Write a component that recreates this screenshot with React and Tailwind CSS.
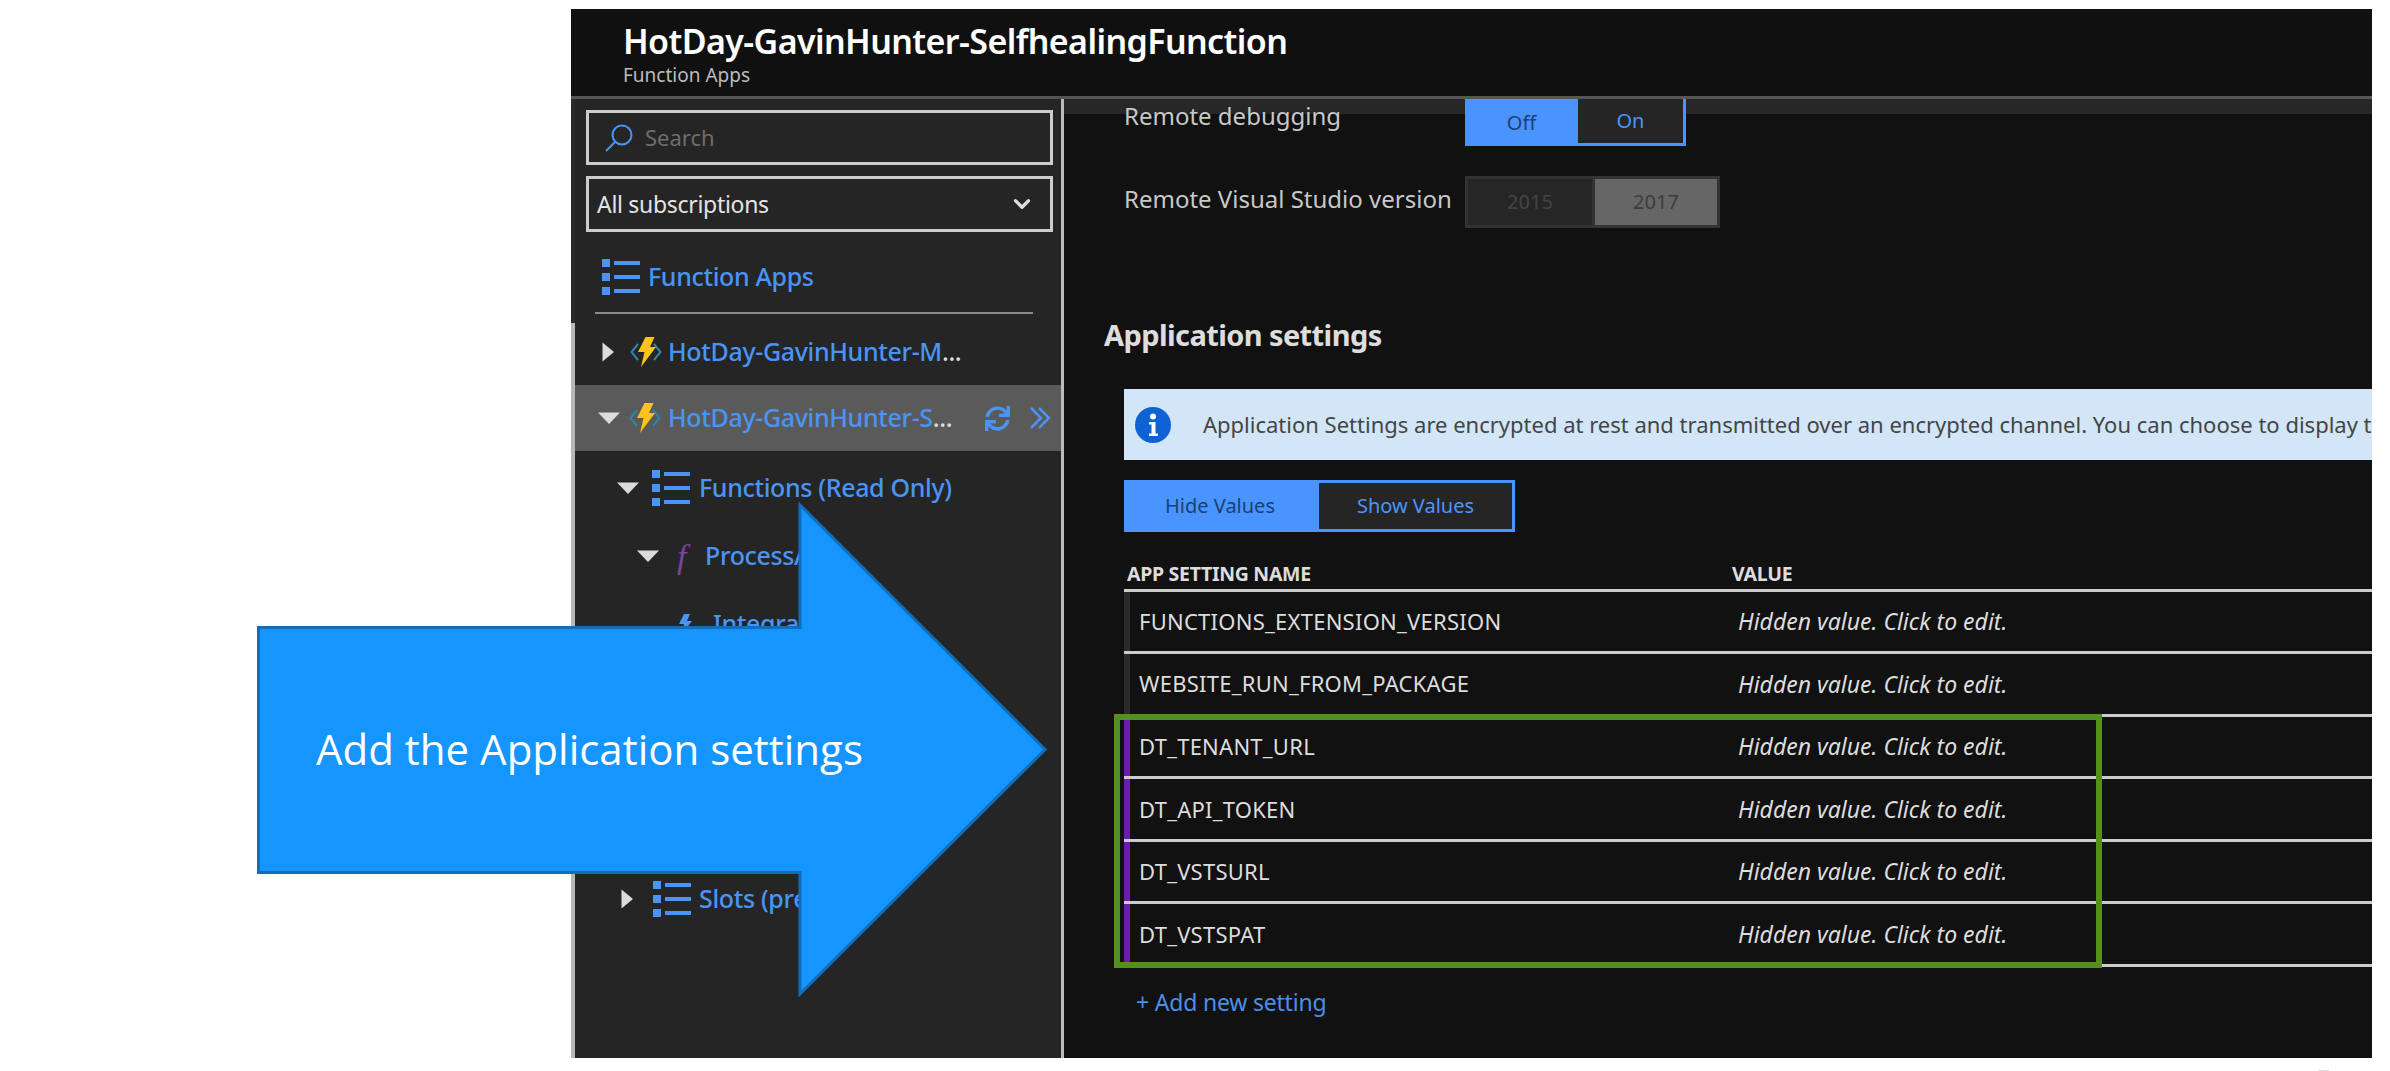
import React from 'react';
import { ChevronDown } from 'lucide-react';
import { FaSync } from 'react-icons/fa';

const ListIcon = ({ className }) => (
  <svg viewBox="0 0 38 36" className={className} fill="#4a94f5">
    <rect x="0" y="0" width="8" height="8" />
    <rect x="12" y="2" width="26" height="4" />
    <rect x="0" y="14" width="8" height="8" />
    <rect x="12" y="16" width="26" height="4" />
    <rect x="0" y="28" width="8" height="8" />
    <rect x="12" y="30" width="26" height="4" />
  </svg>
);

const FunctionIcon = () => (
  <svg viewBox="0 0 32 30" className="w-8 h-[30px] shrink-0">
    <path d="M8 7 L1.5 15 L8 23" fill="none" stroke="#2f86a8" strokeWidth="2" />
    <path d="M24 7 L30.5 15 L24 23" fill="none" stroke="#2f86a8" strokeWidth="2" />
    <path d="M15.5 0 H24.5 L20 10 H26 L11 30 L14.5 15 H8 Z" fill="#fcc419" />
  </svg>
);

const TriRight = () => (
  <svg viewBox="0 0 12 20" className="w-3 h-5 shrink-0"><path d="M0.5 0.5 L12 10 L0.5 19.5 Z" fill="#dcdcdc" /></svg>
);

const TriDown = () => (
  <svg viewBox="0 0 22 12" className="w-[22px] h-3 shrink-0"><path d="M0 0.5 H22 L11 12 Z" fill="#dcdcdc" /></svg>
);

const InfoIcon = () => (
  <svg viewBox="0 0 36 36" className="w-9 h-9 shrink-0">
    <circle cx="18" cy="18" r="18" fill="#0f62d6" />
    <circle cx="18" cy="9.5" r="3" fill="#fff" />
    <path d="M14 15 H20.5 V26.5 H23 V29 H14 V26.5 H16.5 V17.5 H14 Z" fill="#fff" />
  </svg>
);

const settings = [
  { name: 'FUNCTIONS_EXTENSION_VERSION' },
  { name: 'WEBSITE_RUN_FROM_PACKAGE' },
];

const added = [
  { name: 'DT_TENANT_URL' },
  { name: 'DT_API_TOKEN' },
  { name: 'DT_VSTSURL' },
  { name: 'DT_VSTSPAT' },
];

const SettingRow = ({ name, barClass }) => (
  <div className="flex items-stretch h-[62.6px] border-b-[3px] border-[#cccccc]">
    <div className={`w-[6px] shrink-0 ${barClass}`} />
    <div className="w-[608px] pl-[9px] shrink-0 flex items-center text-[22px] tracking-[0.25px] text-[#dddddd]">{name}</div>
    <div className="flex items-center italic text-[23px] text-[#dddddd]">Hidden value. Click to edit.</div>
  </div>
);

const Sidebar = () => (
  <div className="w-[486px] shrink-0 bg-[#252525] flex flex-col text-[#4a94f5] text-[25px] font-medium tracking-[-0.35px]">
    <div className="ml-[11px] mr-[8px] mt-[11px] h-[55px] border-[3px] border-[#cccccc] flex items-center pl-[16px] gap-[12px] text-[#6d6d6d] text-[22px] font-normal tracking-normal">
      <svg viewBox="0 0 28 28" className="w-7 h-7 shrink-0" fill="none" stroke="#4a94f5" strokeWidth="2">
        <circle cx="17" cy="11" r="9.5" />
        <path d="M10 18 L1 27" />
      </svg>
      Search
    </div>
    <div className="ml-[11px] mr-[8px] mt-[11px] h-[56px] border-[3px] border-[#cccccc] flex items-center justify-between pl-[8px] pr-[15px] text-[#e4e4e4] text-[23px] tracking-[-0.3px] font-normal">
      All subscriptions
      <ChevronDown className="w-[26px] h-[26px] text-[#dddddd]" strokeWidth={3} />
    </div>

    <div className="ml-[20px] mr-[28px] h-[82px] border-b-2 border-[#8a8a8a] flex items-center pl-[7px] pt-[9px] gap-[8px]">
      <ListIcon className="w-[38px] h-9 shrink-0" />
      <span>Function Apps</span>
    </div>

    <div className="h-[66px] mt-[5px] flex items-center pl-[27px]">
      <TriRight />
      <div className="ml-[16px]"><FunctionIcon /></div>
      <span className="ml-[6px] whitespace-nowrap">HotDay-GavinHunter-M<span className="text-[#dddddd]">...</span></span>
    </div>
    <div className="h-[66px] bg-[#5a5a5a] flex items-center pl-[23px]">
      <TriDown />
      <div className="ml-[9px]"><FunctionIcon /></div>
      <span className="ml-[7px] whitespace-nowrap">HotDay-GavinHunter-S<span className="text-[#dddddd]">...</span></span>
      <FaSync className="ml-[33px] w-[25px] h-[25px] shrink-0" />
      <svg viewBox="0 0 22 24" className="ml-[19px] w-[22px] h-6 shrink-0" fill="none" stroke="#4a94f5" strokeWidth="2.5">
        <path d="M2 2 L12 12 L2 22" />
        <path d="M10 2 L20 12 L10 22" />
      </svg>
    </div>

    <div className="h-[68px] mt-[3px] flex items-center pl-[42px]">
      <TriDown />
      <ListIcon className="ml-[13px] w-[38px] h-9 shrink-0" />
      <span className="ml-[9px] whitespace-nowrap">Functions (Read Only)</span>
    </div>
    <div className="h-[68px] flex items-center pl-[62px]">
      <TriDown />
      <span className="ml-[18px] w-[28px] font-['Liberation_Serif',serif] italic text-[34px] text-[#7b439c]">f</span>
      <span className="whitespace-nowrap">ProcessA</span>
    </div>
    <div className="h-[68px] flex items-center pl-[103px]">
      <svg viewBox="0 0 14 20" className="w-[14px] h-5 shrink-0" fill="#4a94f5"><path d="M6 0 H12 L9 7 H14 L4 20 L6 10 H1 Z" /></svg>
      <span className="ml-[21px] whitespace-nowrap">Integrate</span>
    </div>
    <div className="h-[68px] mt-[207px] flex items-center pl-[46px]">
      <TriRight />
      <ListIcon className="ml-[20px] w-[38px] h-9 shrink-0" />
      <span className="ml-[8px] whitespace-nowrap">Slots (preview)</span>
    </div>
  </div>
);

const Main = () => (
  <div className="flex-1 min-w-0 overflow-hidden bg-[#111111] bg-[linear-gradient(#272727_15px,transparent_15px)] pl-[60px] flex flex-col">
    <div className="flex h-[47px]">
      <div className="w-[341px] text-[24px] text-[#c8c8c8] leading-[34px]">Remote debugging</div>
      <div className="flex text-[20px] h-full">
        <div className="w-[113px] bg-[#4a94ff] text-[#1d3f73] flex items-center justify-center">Off</div>
        <div className="w-[108px] bg-[#252525] border-r-[3px] border-b-[3px] border-[#4a94ff] text-[#4a94ff] flex items-center justify-center">On</div>
      </div>
    </div>
    <div className="flex mt-[30px] h-[52px]">
      <div className="w-[341px] text-[24px] text-[#c8c8c8] leading-[46px]">Remote Visual Studio version</div>
      <div className="flex text-[20px] h-full border-[3px] border-[#333333]">
        <div className="w-[124px] bg-[#262626] text-[#444444] flex items-center justify-center">2015</div>
        <div className="w-[125px] bg-[#666666] border-l-[3px] border-[#333333] text-[#3c3c3c] flex items-center justify-center">2017</div>
      </div>
    </div>

    <div className="-ml-[20px] mt-[87px] h-[40px] flex items-center font-bold text-[29px] tracking-[-0.6px] text-[#dddddd]">Application settings</div>

    <div className="mt-[34px] h-[71px] bg-[#d2e6f7] flex items-center pl-[11px] whitespace-nowrap overflow-hidden">
      <InfoIcon />
      <span className="ml-[32px] text-[22px] text-[#454545]">Application Settings are encrypted at rest and transmitted over an encrypted channel. You can choose to display t</span>
    </div>

    <div className="mt-[20px] h-[52px] w-[391px] flex text-[20px]">
      <div className="w-[192px] bg-[#4a94ff] text-[#1d3f73] flex items-center justify-center">Hide Values</div>
      <div className="w-[199px] bg-[#252525] border-[3px] border-[#4a94ff] text-[#4a94ff] flex items-center justify-center">Show Values</div>
    </div>

    <div className="h-[59.5px] border-b-[3px] border-[#cccccc] flex items-center pt-[27px] pl-[3px] font-bold text-[19.5px] tracking-[-0.3px] text-[#dddddd]">
      <div className="w-[605px]">APP SETTING NAME</div>
      <div>VALUE</div>
    </div>

    {settings.map((s) => (
      <SettingRow key={s.name} name={s.name} barClass="bg-[#2a2a2a]" />
    ))}
    <div className="relative">
      {added.map((s) => (
        <SettingRow key={s.name} name={s.name} barClass="bg-[#6a1bb0]" />
      ))}
      <div className="absolute -left-[10px] -top-[3px] -bottom-[1px] w-[988px] border-[6px] border-[#548f1f]" />
    </div>

    <div className="mt-[18px] pl-[12px] text-[23px] tracking-[-0.2px] text-[#4a8fe8]">+ Add new setting</div>
  </div>
);

export default function App() {
  return (
    <div className="relative w-[2390px] h-[1071px] bg-white overflow-hidden font-['Noto_Sans',sans-serif]">
      <div className="ml-[571px] mt-[9px] w-[1801px] h-[1049px] flex flex-col bg-[#101010]">
        <div className="h-[90px] shrink-0 pt-[9px] pl-[52px] border-b-[3px] border-[#555555]">
          <div className="text-[34px] leading-[46px] font-semibold tracking-[-0.6px] text-white whitespace-nowrap">HotDay-GavinHunter-SelfhealingFunction</div>
          <div className="text-[19px] leading-[22px] text-[#bbbbbb]">Function Apps</div>
        </div>
        <div className="flex-1 flex min-h-0">
          <div className="w-[4px] shrink-0 bg-[linear-gradient(#2b2b2b_224px,#b8b8b8_224px)]" />
          <Sidebar />
          <div className="w-[3px] shrink-0 bg-[#bbbbbb]" />
          <Main />
        </div>
      </div>

      <div className="absolute left-[2318px] top-[1070px] w-[11px] h-px bg-[#dddddd]" />

      <div className="absolute left-[256px] top-[498px] w-[796px] h-[504px]">
        <svg viewBox="0 0 796 504" className="absolute inset-0 w-full h-full">
          <polygon points="2.5,129.5 544,129.5 544,7 789,251.5 544,496 544,374.5 2.5,374.5" fill="#1595ff" stroke="#0f6fbd" strokeWidth="3" />
        </svg>
        <div className="absolute left-[60px] top-[223px] font-['Open_Sans',sans-serif] text-[42px] leading-[56px] text-white whitespace-nowrap">Add the Application settings</div>
      </div>
    </div>
  );
}
